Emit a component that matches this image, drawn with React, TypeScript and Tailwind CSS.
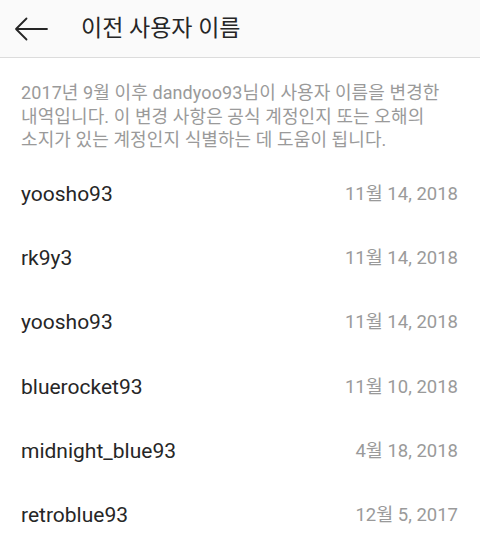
import React from 'react';

const rows = [
  { name: 'yoosho93', date: '11월 14, 2018' },
  { name: 'rk9y3', date: '11월 14, 2018' },
  { name: 'yoosho93', date: '11월 14, 2018' },
  { name: 'bluerocket93', date: '11월 10, 2018' },
  { name: 'midnight_blue93', date: '4월 18, 2018' },
  { name: 'retroblue93', date: '12월 5, 2017' },
];

export default function App() {
  return (
    <div
      className="w-[480px] h-[553px] overflow-hidden bg-white"
      style={{ fontFamily: 'Roboto, "Noto Sans CJK KR", sans-serif' }}
    >
      {/* Header */}
      <header className="flex h-[58px] items-center border-b border-[#dcdcdc] bg-[#fafafa]">
        <div className="flex w-[81px] items-center pl-[14px]">
          <svg width="35" height="24" viewBox="0 0 35 24" fill="none">
            <path d="M2 12H33M2 12L12.5 1.5M2 12L12.5 22.5" stroke="#262626" strokeWidth="1.8" strokeLinecap="round" strokeLinejoin="round" />
          </svg>
        </div>
        <h1 className="text-[23px] leading-none text-[#262626]">이전 사용자 이름</h1>
      </header>

      {/* Description */}
      <p className="px-[21px] pt-[23px] pb-[11px] text-[18px] leading-[23.5px] tracking-[0.1px] text-[#9a9a9a] whitespace-nowrap">
        2017년 9월 이후 dandyoo93님이 사용자 이름을 변경한
        <br />
        내역입니다. 이 변경 사항은 공식 계정인지 또는 오해의
        <br />
        소지가 있는 계정인지 식별하는 데 도움이 됩니다.
      </p>

      {/* List */}
      <ul>
        {rows.map((row, i) => (
          <li key={i} className="flex h-[64.3px] items-center justify-between pl-[21px] pr-[22px]">
            <span className="text-[21px] text-[#262626]">{row.name}</span>
            <span className="text-[18.5px] text-[#9a9a9a]">{row.date}</span>
          </li>
        ))}
      </ul>
    </div>
  );
}
